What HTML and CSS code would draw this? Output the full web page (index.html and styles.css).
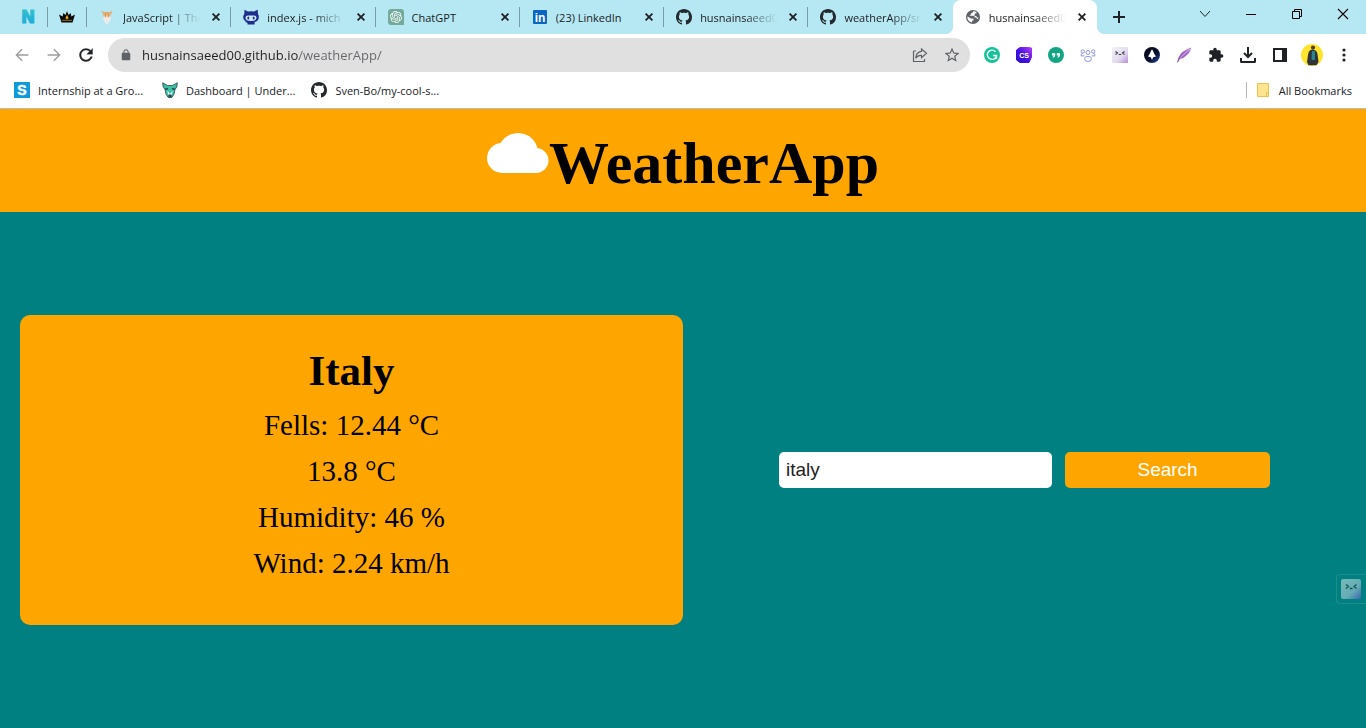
FILE: index.html
```html
<!DOCTYPE html>
<html lang="en">
<head>
<meta charset="utf-8">
<title>WeatherApp</title>
<link rel="stylesheet" href="styles.css">
</head>
<body>
<svg class="defs" aria-hidden="true">
  <defs>
    <linearGradient id="g-n" x1="0" y1="0" x2="0" y2="1"><stop offset="0" stop-color="#35c3cc"/><stop offset="1" stop-color="#19a7dc"/></linearGradient>
    <linearGradient id="g-cs" x1="0" y1="1" x2="1" y2="0"><stop offset="0" stop-color="#2a0bd0"/><stop offset=".5" stop-color="#4a12e0"/><stop offset="1" stop-color="#b23cf5"/></linearGradient>
    <linearGradient id="g-face" x1="0" y1="0" x2="1" y2="1"><stop offset="0" stop-color="#f3f1f6"/><stop offset=".6" stop-color="#e2dbee"/><stop offset="1" stop-color="#b48be0"/></linearGradient>
    <linearGradient id="g-ship" x1="0" y1="0" x2="1" y2="1"><stop offset="0" stop-color="#05060f"/><stop offset=".6" stop-color="#0a1030"/><stop offset="1" stop-color="#2a56b8"/></linearGradient>
    <linearGradient id="g-quill" x1="0" y1="1" x2="1" y2="0"><stop offset="0" stop-color="#8b4fb0"/><stop offset="1" stop-color="#b07ad2"/></linearGradient>
    <linearGradient id="g-widget" x1="0" y1="0" x2="1" y2="1"><stop offset="0" stop-color="#78b9b8"/><stop offset=".6" stop-color="#65acb4"/><stop offset="1" stop-color="#3b68b0"/></linearGradient>
    <symbol id="github" viewBox="0 0 16 16"><path fill="#24292f" d="M8 0C3.58 0 0 3.58 0 8c0 3.54 2.29 6.53 5.47 7.59.4.07.55-.17.55-.38 0-.19-.01-.82-.01-1.49-2.01.37-2.53-.49-2.69-.94-.09-.23-.48-.94-.82-1.13-.28-.15-.68-.52-.01-.53.63-.01 1.08.58 1.23.82.72 1.21 1.87.87 2.33.66.07-.52.28-.87.51-1.07-1.78-.2-3.64-.89-3.64-3.95 0-.87.31-1.59.82-2.15-.08-.2-.36-1.02.08-2.12 0 0 .67-.21 2.2.82.64-.18 1.32-.27 2-.27s1.36.09 2 .27c1.53-1.04 2.2-.82 2.2-.82.44 1.1.16 1.92.08 2.12.51.56.82 1.27.82 2.15 0 3.07-1.87 3.75-3.65 3.95.29.25.54.73.54 1.48 0 1.07-.01 1.93-.01 2.2 0 .21.15.46.55.38A8.01 8.01 0 0 0 16 8c0-4.42-3.58-8-8-8z"/></symbol>
    <symbol id="close" viewBox="0 0 16 16"><path d="M4.6 4.6l6.8 6.8M11.4 4.6l-6.8 6.8" stroke="#202124" stroke-width="1.8" fill="none"/></symbol>
  </defs>
</svg>

<header class="browser">
  <nav class="tabstrip" aria-label="Tabs">
    <div class="tab pinned pinned-first"><svg class="icon" viewBox="0 0 16 16"><text class="mark mark-wide" x="8" y="14" font-size="17" fill="url(#g-n)" stroke="url(#g-n)" stroke-width="1">N</text></svg></div>
    <div class="tab pinned"><svg class="icon" viewBox="0 0 16 16"><path d="M2.5 13.4L0 5.4l3.6 2.2.8-3.6L6.4 6 8 2.2 9.600 6l2-2 .8 3.600L16 5.400l-2.500 8z" fill="#0b0b0b"/><path d="M3 11.300h10" stroke="#b38a1e" stroke-width=".8"/><path d="M8 5.800l1.600 3.200L8 10.600 6.400 9z" fill="#f2a80c"/></svg></div>
    <div class="tab">
      <svg class="icon" viewBox="0 0 16 16"><path d="M3 1c-.8 2 0 4 2 4.500L11 5.500c2-.5 2.800-2.500 2-4.500-.6 1.500-1.500 2.200-2.600 2.200H5.600C4.500 3.200 3.600 2.500 3 1z" fill="#e3b27b"/><path d="M4.500 4.200Q8 2 11.500 4.200V7.500h-7z" fill="#e5a862"/><path d="M5 6.500h6v3H5z" fill="#f6d5b8"/><path d="M4 7.500q1.500 1.500 4 1.200 2.500.3 4-1.200.3 4-2 5.500L8.500 16 6 13.500Q3.800 11.500 4 7.500z" fill="#ecebea"/><path d="M6 7h1M9 7h1" stroke="#8c5a3a"/></svg>
      <span class="tab-title">JavaScript | The</span>
      <button class="tab-close" aria-label="Close JavaScript"><svg class="icon"><use href="#close"/></svg></button>
    </div>
    <div class="tab">
      <svg class="icon" viewBox="0 0 16 16"><path d="M1.500 1.200Q1 .6 2 1l3 1.600q3-.6 6 0L14 1q1-.4.8.400L15 5q1 1.500.8 3.500-.3 3.800-4.200 4.500v2.600H4.500V14L1.600 12.500l2.700.300Q.5 12 .2 8.500 0 6.500 1.300 5z" fill="#1d2e8c"/><path d="M2.500 8.500q.3-2 2.500-2h6q2.200 0 2.500 2 .2 3.500-5.500 3.500T2.500 8.500z" fill="#cdeaf8"/><ellipse cx="5.300" cy="9" rx="1" ry="1.500" fill="#1d2e8c"/><ellipse cx="10.700" cy="9" rx="1" ry="1.500" fill="#1d2e8c"/></svg>
      <span class="tab-title">index.js - mich</span>
      <button class="tab-close" aria-label="Close index.js"><svg class="icon"><use href="#close"/></svg></button>
    </div>
    <div class="tab">
      <svg class="icon" viewBox="0 0 32 32"><path d="M6 0h20q6 0 6 6v26H6q-6 0-6-6V6q0-6 6-6z" fill="#74aa9c"/><g transform="translate(4 4)"><path fill="#fff" d="M22.2819 9.8211a5.9847 5.9847 0 0 0-.5157-4.9108 6.0462 6.0462 0 0 0-6.5098-2.9A6.0651 6.0651 0 0 0 4.9807 4.1818a5.9847 5.9847 0 0 0-3.9977 2.9 6.0462 6.0462 0 0 0 .7427 7.0966 5.98 5.98 0 0 0 .511 4.9107 6.051 6.051 0 0 0 6.5146 2.9001A5.9847 5.9847 0 0 0 13.2599 24a6.0557 6.0557 0 0 0 5.7718-4.2058 5.9894 5.9894 0 0 0 3.9977-2.9001 6.0557 6.0557 0 0 0-.7475-7.0729zm-9.022 12.6081a4.4755 4.4755 0 0 1-2.8764-1.0408l.1419-.0804 4.7783-2.7582a.7948.7948 0 0 0 .3927-.6813v-6.7369l2.02 1.1686a.071.071 0 0 1 .038.052v5.5826a4.504 4.504 0 0 1-4.4945 4.4944zm-9.6607-4.1254a4.4708 4.4708 0 0 1-.5346-3.0137l.142.0852 4.783 2.7582a.7712.7712 0 0 0 .7806 0l5.8428-3.3685v2.3324a.0804.0804 0 0 1-.0332.0615L9.74 19.9502a4.4992 4.4992 0 0 1-6.1408-1.6464zM2.3408 7.8956a4.485 4.485 0 0 1 2.3655-1.9728V11.6a.7664.7664 0 0 0 .3879.6765l5.8144 3.3543-2.0201 1.1685a.0757.0757 0 0 1-.071 0l-4.8303-2.7865A4.504 4.504 0 0 1 2.3408 7.872zm16.5963 3.8558L13.1038 8.364 15.1192 7.2a.0757.0757 0 0 1 .071 0l4.8303 2.7913a4.4944 4.4944 0 0 1-.6765 8.1042v-5.6772a.79.79 0 0 0-.407-.667zm2.0107-3.0231l-.142-.0852-4.7735-2.7818a.7759.7759 0 0 0-.7854 0L9.409 9.2297V6.8974a.0662.0662 0 0 1 .0284-.0615l4.8303-2.7866a4.4992 4.4992 0 0 1 6.6802 4.66zM8.3065 12.863l-2.02-1.1638a.0804.0804 0 0 1-.038-.0567V6.0742a4.4992 4.4992 0 0 1 7.3757-3.4537l-.142.0805L8.704 5.459a.7948.7948 0 0 0-.3927.6813zm1.0976-2.3654l2.602-1.4998 2.6069 1.4998v2.9994l-2.5974 1.4997-2.6067-1.4997Z"/></g></svg>
      <span class="tab-title whole">ChatGPT</span>
      <button class="tab-close" aria-label="Close ChatGPT"><svg class="icon"><use href="#close"/></svg></button>
    </div>
    <div class="tab">
      <svg class="icon" viewBox="0 0 16 16"><rect x="1" y="1" width="14" height="14" rx="1" fill="#0a66c2"/><text class="mark" x="8" y="13" font-size="12" fill="#fff">in</text></svg>
      <span class="tab-title whole">(23) LinkedIn</span>
      <button class="tab-close" aria-label="Close LinkedIn"><svg class="icon"><use href="#close"/></svg></button>
    </div>
    <div class="tab">
      <svg class="icon"><use href="#github"/></svg>
      <span class="tab-title">husnainsaeed0</span>
      <button class="tab-close" aria-label="Close husnainsaeed00"><svg class="icon"><use href="#close"/></svg></button>
    </div>
    <div class="tab before-active">
      <svg class="icon"><use href="#github"/></svg>
      <span class="tab-title">weatherApp/sr</span>
      <button class="tab-close" aria-label="Close weatherApp"><svg class="icon"><use href="#close"/></svg></button>
    </div>
    <div class="tab active">
      <svg class="icon" viewBox="0 0 16 16"><circle cx="8" cy="8" r="7" fill="#5f6368"/><path d="M8.300 2.300q-.2 1.700-1.800 2-.8.200-.700 1.200L4.500 6.800h4q1.300.2 1.200 1.700l1.500.1q.3 1.600 1.700 1.400l.6-1.400-1.600-.2-.6-1.500H9.600V4.600l1.700-.2.300-1.200Q10 2.200 8.300 2.300zM2.300 7.500q0 4.800 4.700 6v-1.700l1.500-.4V9.800L6 9.600z" fill="#fff"/></svg>
      <span class="tab-title">husnainsaeed0</span>
      <button class="tab-close" aria-label="Close current tab"><svg class="icon"><use href="#close"/></svg></button>
    </div>
    <div class="strip-end">
      <button class="new-tab" aria-label="New tab"><svg class="icon" viewBox="0 0 16 16"><path d="M8 2v12M2 8h12" stroke="#202124" stroke-width="2"/></svg></button>
      <div class="window-buttons">
        <button aria-label="Search tabs"><svg class="icon" viewBox="0 0 16 16"><path d="M3 5l5 5.500L13 5" fill="none" stroke="#222"/></svg></button>
        <button aria-label="Minimize"><svg class="icon" viewBox="0 0 16 16"><path d="M3 8.500h10" stroke="#000"/></svg></button>
        <button aria-label="Restore"><svg class="icon" viewBox="0 0 16 16"><path d="M3.500 5.500h7v7h-7zM5.500 5.500v-2h7v7h-2" fill="none" stroke="#000"/></svg></button>
        <button aria-label="Close window"><svg class="icon" viewBox="0 0 16 16"><path d="M3 3l10 10M13 3L3 13" stroke="#000" stroke-width="1.100"/></svg></button>
      </div>
    </div>
  </nav>

  <div class="toolbar">
    <div class="tools">
      <button class="tool" aria-label="Back"><svg class="icon-lg" viewBox="0 0 24 24"><path fill="#9a9c9f" d="M20.500 11H6.800l6-5.900L11.500 3.700 3.200 12l8.300 8.300 1.400-1.400L6.800 13h13.700z"/></svg></button>
      <button class="tool" aria-label="Forward"><svg class="icon-lg" viewBox="0 0 24 24"><path fill="#9a9c9f" d="M3.500 11h13.700l-6-5.900 1.300-1.400 8.300 8.300-8.300 8.300-1.400-1.400 6.100-5.900H3.500z"/></svg></button>
      <button class="tool" aria-label="Reload"><svg class="icon-lg" viewBox="1 1 22 22"><path fill="#202124" stroke="#202124" stroke-width=".4" d="M17.65 6.35C16.2 4.9 14.21 4 12 4c-4.42 0-7.99 3.58-7.99 8s3.57 8 7.99 8c3.730 0 6.840-2.550 7.730-6h-2.080c-.82 2.330-3.040 4-5.650 4-3.310 0-6-2.690-6-6s2.690-6 6-6c1.660 0 3.140.69 4.220 1.780L13 11h7V4l-2.350 2.350z"/></svg></button>
    </div>
    <div class="omnibox">
      <svg class="icon" viewBox="-3 -3 30 30"><path fill="#5f6368" d="M18 8h-1V6c0-2.760-2.240-5-5-5S7 3.240 7 6v2H6c-1.100 0-2 .9-2 2v10c0 1.100.9 2 2 2h12c1.100 0 2-.9 2-2V10c0-1.100-.9-2-2-2zM9 6c0-1.660 1.340-3 3-3s3 1.340 3 3v2H9V6z"/></svg>
      <input class="address" type="text" aria-label="Address" value="husnainsaeed00.github.io/weatherApp/">
      <button class="tool" aria-label="Share"><svg class="icon-lg" viewBox="0 0 18 18"><path d="M2.500 5v10.500h11V13M2.500 5H5M10.500 3l5 4.300-5 4.300V9.300Q6.500 9 4.700 12.300 5 6.200 10.500 5.400z" fill="none" stroke="#5f6368" stroke-width="1.200"/></svg></button>
      <button class="tool" aria-label="Bookmark this page"><svg class="icon-lg" viewBox="0 0 24 24"><path fill="#5f6368" d="M22 9.240l-7.190-.62L12 2 9.190 8.630 2 9.240l5.460 4.730L5.820 21 12 17.270 18.180 21l-1.630-7.030L22 9.240zM12 15.400l-3.760 2.270 1-4.280-3.320-2.880 4.380-.38L12 6.100l1.710 4.040 4.380.38-3.320 2.880 1 4.280L12 15.400z"/></svg></button>
    </div>
    <div class="tools">
      <button class="tool" aria-label="Grammarly"><svg class="icon" viewBox="0 0 16 16"><circle cx="8" cy="8" r="8" fill="#15c39a"/><path d="M11.500 4.800A4.600 4.600 0 1 0 12.500 8.500H9M12.500 8.500v3.200M12.400 11.500h-1.800" fill="none" stroke="#fff" stroke-width="1.400"/></svg></button>
      <button class="tool" aria-label="CS extension"><svg class="icon" viewBox="0 0 16 16"><path d="M4 .5h8l3.500.5v9L13 15.500H4L.5 13V3z" fill="url(#g-cs)" stroke="url(#g-cs)" stroke-linejoin="round"/><text class="mark" x="8" y="10.500" font-size="7" fill="#fff">CS</text></svg></button>
      <button class="tool" aria-label="Quotes extension"><svg class="icon" viewBox="0 0 16 16"><circle cx="8" cy="8" r="8" fill="#13a583"/><path d="M4 6.200h3.200v2.300q-.2 2-2.400 2.200V9.400q1-.2 1-1H4zM8.800 6.200H12v2.300q-.2 2-2.400 2.200V9.400q1-.2 1-1H8.800z" fill="#fff"/></svg></button>
      <button class="tool" aria-label="Bear extension"><svg class="icon" viewBox="0 0 16 16" fill="none" stroke="#8c93d8"><circle cx="2.800" cy="4.500" r="1.700"/><circle cx="13.200" cy="4.500" r="1.700"/><circle cx="8" cy="5.500" r="2"/><path d="M2.800 6.200q-2 .5-1.700 2.700h3.200M13.200 6.200q2 .5 1.700 2.700h-3.200M4.500 11.500q0-2 3.500-2t3.500 2q0 3-3.500 3t-3.500-3z"/></svg></button>
      <button class="tool" aria-label="Face extension"><svg class="icon" viewBox="0 0 16 16"><rect width="16" height="16" rx="1" fill="url(#g-face)"/><path d="M3.500 4.500L5.500 6l-2 1.500M12.500 4.500L10.500 6l2 1.500M6.800 7.500h2.400" fill="none" stroke="#3c3947" stroke-width="1.100"/></svg></button>
      <button class="tool" aria-label="Rocket extension"><svg class="icon" viewBox="0 0 16 16"><circle cx="8" cy="8" r="8" fill="url(#g-ship)"/><path d="M8 2.300q1.500 2 2.200 4.500l1.800 2.700-2.800.8L8 13l-1.200-2.700L4 9.500l1.800-2.700Q6.500 4.300 8 2.300z" fill="#fff"/></svg></button>
      <button class="tool" aria-label="Quill extension"><svg class="icon" viewBox="0 0 16 16"><path d="M1 15.500L2.500 10.500Q5 4 15 .5 14.500 5 11 8 8 11 4 12L1.800 15.500z" fill="url(#g-quill)"/><path d="M4 11.500Q8 6.500 14 2" stroke="#ead8f4" stroke-width=".7" fill="none"/></svg></button>
      <button class="tool" aria-label="Extensions"><svg class="icon" viewBox="0 0 24 24"><path fill="#202124" d="M20.500 11H19V7c0-1.100-.9-2-2-2h-4V3.500C13 2.120 11.880 1 10.500 1S8 2.120 8 3.500V5H4c-1.100 0-1.990.9-1.990 2v3.800H3.500c1.490 0 2.700 1.210 2.700 2.700s-1.210 2.700-2.700 2.700H2V20c0 1.100.9 2 2 2h3.800v-1.500c0-1.490 1.210-2.700 2.700-2.700 1.490 0 2.700 1.210 2.700 2.700V22H17c1.100 0 2-.9 2-2v-4h1.500c1.380 0 2.500-1.120 2.500-2.500S21.880 11 20.500 11z"/></svg></button>
      <button class="tool" aria-label="Downloads"><svg class="icon-lg" viewBox="0 0 18 18"><path d="M9 1v9.500M5 7l4 4 4-4M2 12v3.500q0 .5.500.5h13q.5 0 .5-.5V12" fill="none" stroke="#202124" stroke-width="2"/></svg></button>
      <button class="tool" aria-label="Side panel"><svg class="icon" viewBox="0 0 16 16"><path fill="#202124" fill-rule="evenodd" d="M1 1h14v14H1zM3 3v10h7V3z"/></svg></button>
      <button class="tool" aria-label="Profile"><svg class="avatar" viewBox="0 0 22 22"><circle cx="11" cy="11" r="11" fill="#fde52f"/><path d="M9.500 6q2.500-1.200 4.500.3 2.500 1.200 2.700 5.200l.8 6.500-2 3.200H7.500L6 18l1-7q.3-3.800 2.500-5z" fill="#30343a"/><path d="M11 7h3v9h-3.500z" fill="#28838d"/><circle cx="12" cy="3.600" r="2.100" fill="#5a3b26"/></svg></button>
      <button class="tool" aria-label="Menu"><svg class="icon" viewBox="0 0 16 16" fill="#202124"><circle cx="8" cy="3" r="1.600"/><circle cx="8" cy="8" r="1.600"/><circle cx="8" cy="13" r="1.600"/></svg></button>
    </div>
  </div>

  <nav class="bookmarks" aria-label="Bookmarks">
    <a href="#"><svg class="icon" viewBox="0 0 16 16"><rect width="16" height="16" fill="#0f9bd9"/><text class="mark" x="8" y="13" font-size="14" fill="#fff" stroke="#fff" stroke-width=".5">S</text></svg>Internship at a Gro...</a>
    <a href="#"><svg class="icon" viewBox="0 0 16 16"><path d="M.7.800L5.500 3.500h5L15.300.800Q15.500 5.500 13 7.500L12 12l-2 3.300H6L4 12 3 7.500Q.5 5.500.7.800z" fill="#3fc1a6" stroke="#26434f" stroke-width=".8"/><path d="M3 7.500L6 6.500M13 7.500L10 6.500" stroke="#26434f" stroke-width="1.500" fill="none"/><path d="M5.500 8.500L8 12l2.500-3.500L10 13H6z" fill="#dff5f2"/><path d="M6.500 12.500h3v3h-3z" fill="#26434f"/></svg>Dashboard | Under...</a>
    <a href="#"><svg class="icon"><use href="#github"/></svg>Sven-Bo/my-cool-s...</a>
    <a class="all-bookmarks" href="#"><svg class="icon" viewBox="0 0 16 16"><path d="M2.500 1.500h11v13h-11z" fill="#ffe490" stroke="#ecc04c"/><path d="M11.500 10.500h2v4h-2z" fill="#ffe490" stroke="#ecc04c"/></svg>All Bookmarks</a>
  </nav>
</header>

<div class="app">
  <header class="banner">
    <svg class="cloud" viewBox="0 0 62 40" fill="#fff"><circle cx="15" cy="25" r="15"/><circle cx="31" cy="20" r="20"/><circle cx="49" cy="27.500" r="12.500"/><rect x="15" y="24" width="34" height="16"/></svg>
    <h1>WeatherApp</h1>
  </header>
  <main class="content">
    <section class="weather-card">
      <h2>Italy</h2>
      <p>Fells: 12.44 °C</p>
      <p>13.8 °C</p>
      <p>Humidity: 46 %</p>
      <p>Wind: 2.24 km/h</p>
    </section>
    <form class="search">
      <input type="text" aria-label="City" value="italy">
      <button type="button">Search</button>
    </form>
  </main>
  <button class="side-widget" aria-label="Open assistant"><svg viewBox="0 0 20 20"><rect width="20" height="20" rx="2" fill="url(#g-widget)"/><path d="M5 5.500L7.500 7.500 5 9.500M15.500 5.500L13 7.500l2.500 2M8.800 9.500h2.800" fill="none" stroke="#0f5458" stroke-width="1.300"/></svg></button>
</div>
</body>
</html>
```
FILE: styles.css
```css
* { box-sizing: border-box; }

body {
  margin: 0;
  min-height: 100vh;
  display: flex;
  flex-direction: column;
  font-family: "Liberation Serif", "Times New Roman", serif;
  color: #000;
}

button {
  border: 0;
  padding: 0;
  background: none;
  font: inherit;
  display: flex;
  align-items: center;
  justify-content: center;
}

.defs { position: absolute; width: 0; height: 0; }
.icon { width: 16px; height: 16px; flex: none; display: block; overflow: visible; }
.icon-lg { width: 18px; height: 18px; display: block; }
.avatar { width: 22px; height: 22px; display: block; }
.mark { font-family: "Liberation Sans", Arial, sans-serif; font-weight: 700; text-anchor: middle; }
.mark-wide { font-family: "DejaVu Sans", sans-serif; }

/* Browser frame */
.browser {
  background: #fff;
  border-bottom: 1px solid #b9bcbe;
  font-family: "Open Sans", "Noto Sans", sans-serif;
  font-size: 11px;
  color: #202124;
}

.tabstrip {
  display: flex;
  height: 34px;
  padding-left: 8px;
  background: #b5e8f2;
}

.tab {
  flex: 1 1 0;
  min-width: 0;
  display: flex;
  align-items: center;
  gap: 8px;
  padding: 0 7px 0 12px;
  background: linear-gradient(#7d9ba2, #7d9ba2) right center / 1px 20px no-repeat;
}
.tab.pinned { flex: none; width: 39px; padding-left: 11px; }
.tab.pinned-first { width: 40px; padding-left: 12px; }
.tab.before-active {
  background: radial-gradient(circle at 0 0, transparent 8px, #fff 8px) right bottom / 8px 8px no-repeat;
}
.tab.active { background: #fff; border-radius: 8px 8px 0 0; }

.tab-title {
  flex: 1;
  min-width: 0;
  overflow: hidden;
  white-space: nowrap;
  mask-image: linear-gradient(to right, #000 calc(100% - 32px), transparent);
}
.tab-title.whole { mask-image: none; }

.strip-end {
  flex: none;
  width: 269px;
  display: flex;
  justify-content: space-between;
  align-items: flex-start;
  background: radial-gradient(circle at 8px 0, transparent 8px, #fff 8px) left bottom / 8px 8px no-repeat;
}
.new-tab { width: 44px; height: 34px; }
.window-buttons { display: flex; }
.window-buttons button { width: 46px; height: 28px; }

.toolbar {
  display: flex;
  align-items: center;
  gap: 6px;
  height: 42px;
  padding: 0 6px;
}
.tools { display: flex; }
.tool { width: 32px; height: 32px; }

.omnibox {
  flex: 1;
  display: flex;
  align-items: center;
  height: 34px;
  padding: 0 2px 0 10px;
  border-radius: 17px;
  background: #e0e0e0;
}
.address {
  flex: 1;
  min-width: 0;
  margin-left: 8px;
  padding: 0;
  border: 0;
  outline: 0;
  font-family: "Open Sans", "Noto Sans", sans-serif;
  font-size: 13px;
  color: transparent;
  background: linear-gradient(to right, #202124 157px, #63666a 157px);
  background-clip: text;
  -webkit-background-clip: text;
}

.bookmarks {
  display: flex;
  align-items: center;
  gap: 16px;
  height: 32px;
  padding: 0 14px 4px;
}
.bookmarks a {
  display: flex;
  align-items: center;
  gap: 8px;
  min-width: 132px;
  color: inherit;
  text-decoration: none;
  white-space: nowrap;
}
.bookmarks .all-bookmarks {
  min-width: 0;
  margin-left: auto;
  padding-left: 9px;
  background: linear-gradient(#b5b5b5, #b5b5b5) left center / 1px 16px no-repeat;
}

/* Weather page */
.app {
  position: relative;
  flex: 1;
  display: flex;
  flex-direction: column;
  background: teal;
}

.banner {
  display: flex;
  justify-content: center;
  align-items: flex-start;
  padding: 21px 0 16px;
  background: orange;
}
.cloud { width: 62px; height: 40px; margin-top: 3px; }
.banner h1 { margin: 0; font-size: 60px; line-height: 66px; }

.content {
  flex: 1;
  display: grid;
  grid-template-columns: 1fr 1fr;
  align-items: center;
}

.weather-card {
  margin-left: 20px;
  padding: 29px 20px 39px;
  border-radius: 10px;
  background: orange;
  text-align: center;
}
.weather-card h2 { margin: 0 0 4px; font-size: 43px; line-height: 54px; }
.weather-card p { margin: 0; font-size: 29px; line-height: 46px; }

.search {
  display: flex;
  justify-content: center;
  gap: 13px;
}
.search input,
.search button {
  height: 36px;
  border: 0;
  border-radius: 5px;
  font-family: "Liberation Sans", Arial, sans-serif;
  font-size: 19px;
}
.search input { width: 40%; padding: 0 7px; background: #fff; color: #222; }
.search button { width: 30%; background: orange; color: #fff; }

.side-widget {
  position: absolute;
  right: 0;
  bottom: 124px;
  width: 30px;
  height: 30px;
  padding-right: 1px;
  border: 1px solid #1f8c8c;
  border-right: 0;
  border-radius: 4px 0 0 4px;
}
.side-widget svg { width: 20px; height: 20px; }
```
